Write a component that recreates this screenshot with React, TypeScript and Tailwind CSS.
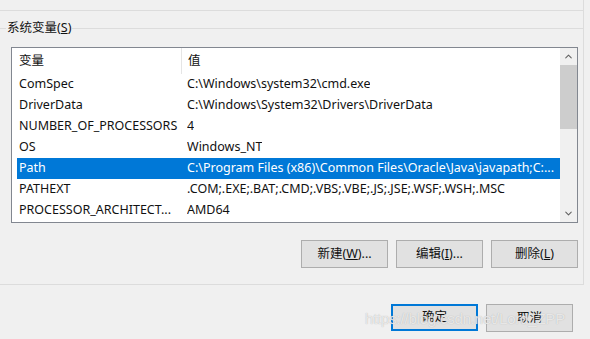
import { ChevronUp, ChevronDown } from 'lucide-react'

const FONT = 'font-["Segoe_UI","Noto_Sans","Noto_Sans_CJK_SC",sans-serif]'

const ROWS = [
  { name: 'ComSpec', value: 'C:\\Windows\\system32\\cmd.exe' },
  { name: 'DriverData', value: 'C:\\Windows\\System32\\Drivers\\DriverData' },
  { name: 'NUMBER_OF_PROCESSORS', value: '4' },
  { name: 'OS', value: 'Windows_NT' },
  { name: 'Path', value: 'C:\\Program Files (x86)\\Common Files\\Oracle\\Java\\javapath;C:...', selected: true },
  { name: 'PATHEXT', value: '.COM;.EXE;.BAT;.CMD;.VBS;.VBE;.JS;.JSE;.WSF;.WSH;.MSC' },
  { name: 'PROCESSOR_ARCHITECT...', value: 'AMD64' },
]

function Btn({ label, hot, rest, primary }: { label: string; hot?: string; rest?: string; primary?: boolean }) {
  return (
    <div
      className={`w-[87px] flex items-center justify-center text-[12.5px] text-[#111] bg-[#e1e1e1] ${
        primary ? 'h-[27px] border-2 border-[#0078d7]' : 'h-[28px] border border-[#adadad]'
      }`}
    >
      {label}
      {hot && (
        <>
          (<span className="underline">{hot}</span>){rest}
        </>
      )}
    </div>
  )
}

export default function App() {
  return (
    <div className={`relative w-[590px] h-[339px] bg-[#f0f0f0] overflow-hidden ${FONT}`}>
      <div className="w-[584px] border-r border-[#dcdcdc]">
        <div className="h-[11px] border-b border-[#dcdcdc]" />
        <div className="h-[17px]" />
        {/* 系统变量 group */}
        <div className="relative border-t border-b border-[#dcdcdc] pt-[18px] pb-[16px]">
          <div className="absolute left-[6px] top-[-10px] px-px bg-[#f0f0f0] text-[12.5px] leading-[18px] text-[#111]">
            系统变量(<span className="underline">S</span>)
          </div>

          <div className="ml-[11px] w-[567px] h-[176px] border border-[#828790] bg-white flex">
            <div className="flex-1 flex flex-col text-[12.5px] text-[#111]">
              <div className="h-[26px] flex items-center">
                <div className="w-[169px] pl-[7px]">变量</div>
                <div className="w-px h-full bg-[#e5e5e5]" />
                <div className="pl-[6px]">值</div>
              </div>
              {ROWS.map((r) => (
                <div
                  key={r.name}
                  className={`h-[21px] ml-[5px] flex items-center whitespace-nowrap ${
                    r.selected ? 'bg-[#0078d7] text-white' : ''
                  }`}
                >
                  <div className="w-[170px] shrink-0 pl-[2px]">{r.name}</div>
                  <div className="overflow-hidden">{r.value}</div>
                </div>
              ))}
            </div>
            <div className="w-[17px] bg-[#f0f0f0] flex flex-col items-center text-[#606060]">
              <div className="h-[17px] flex items-center justify-center">
                <ChevronUp size={11} strokeWidth={2.2} />
              </div>
              <div className="w-full h-[64px] bg-[#cdcdcd]" />
              <div className="flex-1" />
              <div className="h-[17px] flex items-center justify-center">
                <ChevronDown size={11} strokeWidth={2.2} />
              </div>
            </div>
          </div>

          <div className="mt-[17px] w-[578px] flex justify-end gap-[8px]">
            <Btn label="新建" hot="W" rest="..." />
            <Btn label="编辑" hot="I" rest="..." />
            <Btn label="删除" hot="L" />
          </div>
        </div>
      </div>

      <div className="mt-[19px] w-[573px] flex justify-end gap-[8px]">
        <Btn label="确定" primary />
        <Btn label="取消" />
      </div>

      <div className="absolute left-[365px] top-[308px] text-[15px] tracking-[-0.2px] font-['Liberation_Sans',sans-serif] text-white/70 [text-shadow:0_0_1px_#aaa] pointer-events-none">
        https://blog.csdn.net/Lord_ZPP
      </div>
    </div>
  )
}
